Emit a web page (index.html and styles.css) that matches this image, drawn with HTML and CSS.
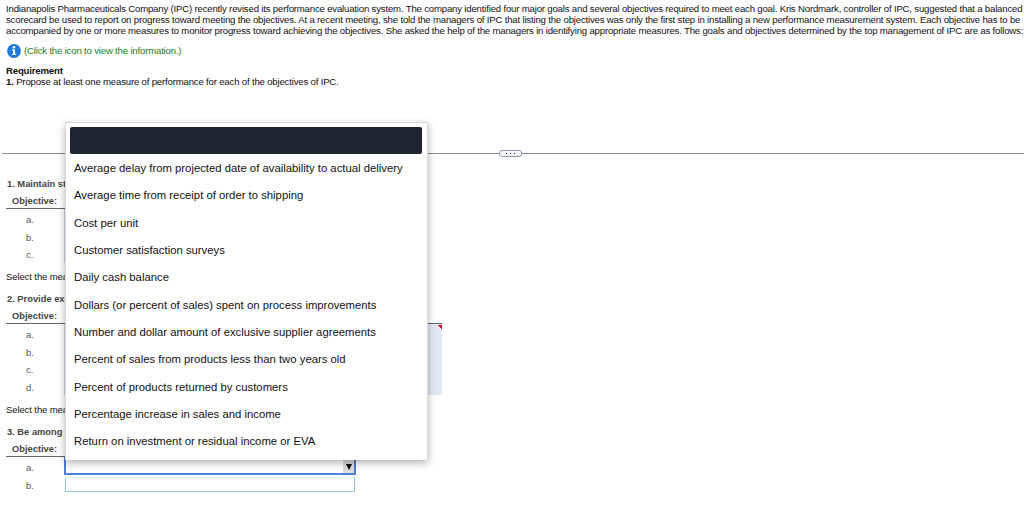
FILE: index.html
```
<!DOCTYPE html>
<html lang="en">
<head>
  <meta charset="UTF-8">
  <title>Indianapolis Pharmaceuticals Company</title>
  <link rel="stylesheet" href="styles.css">
</head>
<body>
  <div class="problem">
    <p class="intro">
      <span class="line">Indianapolis Pharmaceuticals Company (IPC) recently revised its performance evaluation system. The company identified four major goals and several objectives required to meet each goal. Kris Nordmark, controller of IPC, suggested that a balanced</span>
      <span class="line">scorecard be used to report on progress toward meeting the objectives. At a recent meeting, she told the managers of IPC that listing the objectives was only the first step in installing a new performance measurement system. Each objective has to be</span>
      <span class="line">accompanied by one or more measures to monitor progress toward achieving the objectives. She asked the help of the managers in identifying appropriate measures. The goals and objectives determined by the top management of IPC are as follows:</span>
    </p>
    <div class="info">
      <svg class="info-icon" width="14" height="14" viewBox="0 0 14 14">
        <circle cx="7" cy="7" r="6.9" fill="#2079dc"/>
        <circle cx="7" cy="3.3" r="1.3" fill="#fff"/>
        <path d="M5 5.5h3v4.3h1.1v1.3H5V9.8h1.1V6.8H5z" fill="#fff"/>
      </svg>
      <span class="info-text">(Click the icon to view the information.)</span>
    </div>
    <div class="requirement">
      <b class="req-title">Requirement</b>
      <p class="req-text"><b>1.</b> Propose at least one measure of performance for each of the objectives of IPC.</p>
    </div>
  </div>

  <div class="divider">
    <div class="handle"><i></i><i></i><i></i></div>
  </div>

  <div class="sheet">
    <div class="goal goal-1">
      <h3>1. Maintain st</h3>
      <div class="head">Objective:</div>
      <div class="rows">
        <div class="letters"><span>a.</span><span>b.</span><span>c.</span></div>
        <div class="cells"></div>
      </div>
      <p class="note">Select the mea</p>
    </div>
    <div class="goal goal-2">
      <h3>2. Provide ex</h3>
      <div class="head">Objective:</div>
      <div class="rows">
        <div class="letters"><span>a.</span><span>b.</span><span>c.</span><span>d.</span></div>
        <div class="cells"></div>
      </div>
      <p class="note">Select the mea</p>
    </div>
    <div class="goal goal-3">
      <h3>3. Be among</h3>
      <div class="head">Objective:</div>
      <div class="rows">
        <div class="letters"><span>a.</span><span>b.</span></div>
        <div class="fields">
          <div class="select"><div class="arrow"><svg width="6" height="6" viewBox="0 0 6 6"><path d="M0 0h6L3 6z"/></svg></div></div>
          <div class="field"></div>
        </div>
      </div>
    </div>
  </div>

  <div class="menu">
    <div class="item selected"></div>
    <div class="item">Average delay from projected date of availability to actual delivery</div>
    <div class="item">Average time from receipt of order to shipping</div>
    <div class="item">Cost per unit</div>
    <div class="item">Customer satisfaction surveys</div>
    <div class="item">Daily cash balance</div>
    <div class="item">Dollars (or percent of sales) spent on process improvements</div>
    <div class="item">Number and dollar amount of exclusive supplier agreements</div>
    <div class="item">Percent of sales from products less than two years old</div>
    <div class="item">Percent of products returned by customers</div>
    <div class="item">Percentage increase in sales and income</div>
    <div class="item">Return on investment or residual income or EVA</div>
  </div>
</body>
</html>
```
FILE: styles.css
```
* {
  box-sizing: border-box;
}
body {
  margin: 0;
  height: 507px;
  overflow: hidden;
  position: relative;
  background: #fff;
  color: #111;
  font-family: "Liberation Sans", Arial, sans-serif;
  font-size: 9.33px;
}
p, h3 {
  margin: 0;
}
.problem {
  height: 153px;
  padding: 2.5px 0 0 6px;
  font-size: 9.6px;
  letter-spacing: -0.18px;
}
.line {
  display: block;
  line-height: 11.3px;
  white-space: nowrap;
}
.info {
  display: flex;
  align-items: center;
  gap: 3px;
  margin-top: 7.5px;
  height: 14px;
}
.info-icon {
  margin-left: 1px;
}
.info-text {
  color: #1b7d1b;
}
.requirement {
  margin-top: 7px;
  line-height: 11.3px;
}
.req-title {
  display: block;
}
.divider {
  display: flex;
  justify-content: center;
  align-items: center;
  height: 1px;
  margin-left: 2px;
  padding-right: 6px;
  background: #858e98;
}
.handle {
  display: flex;
  justify-content: center;
  align-items: center;
  gap: 3px;
  flex: none;
  width: 23px;
  height: 7px;
  border: 1px solid #8f99a8;
  border-radius: 3px;
  background: #f4f6f8;
}
.handle i {
  width: 1px;
  height: 1px;
  background: #222;
}
.sheet {
  width: 436px;
  margin: 21px 0 0 6px;
}
.goal h3 {
  height: 17px;
  padding-left: 1px;
  font-size: 9.33px;
  line-height: 18px;
  color: #444;
}
.head {
  height: 17px;
  padding-left: 6px;
  border-bottom: 1px solid #666;
  font-weight: bold;
  line-height: 18px;
  color: #444;
}
.goal-1 .head,
.goal-3 .head {
  width: 340px;
}
.rows {
  display: flex;
}
.letters {
  width: 58px;
  padding: 2px 0 0 20px;
  color: #555;
}
.letters span {
  display: block;
  height: 17.6px;
  line-height: 18px;
}
.cells {
  flex: 1;
  margin-bottom: 1px;
  border-left: 1px solid #cdd7ea;
  background: #e1e8f3;
}
.goal-1 .cells {
  flex: none;
  width: 290px;
}
.goal-2 .cells {
  background: linear-gradient(225deg, #c4202c 3.5px, transparent 3.5px) 0 1px no-repeat #e1e8f3;
}
.note {
  height: 26.2px;
  font-size: 9.5px;
  letter-spacing: -0.1px;
  line-height: 26px;
}
.goal-2 .note {
  height: 26.8px;
  line-height: 27px;
}
.fields {
  width: 292px;
}
.select {
  display: flex;
  justify-content: flex-end;
  height: 18px;
  border: 2px solid #4f7fd6;
  border-top: 0;
}
.arrow {
  display: flex;
  justify-content: center;
  align-items: center;
  width: 11px;
  padding-top: 4px;
  background: #dcdcdc;
}
.field {
  width: 290px;
  height: 15px;
  margin: 2px 0 0 1px;
  border: 1px solid #8fc4d2;
  border-top-color: #e6f1f4;
}
/* open dropdown over the sheet */
.menu {
  position: absolute;
  left: 65px;
  top: 122px;
  width: 363px;
  height: 338px;
  padding: 4px;
  border: 1px solid #d8d8d8;
  border-bottom: 0;
  background: #fff;
  box-shadow: 0 3px 8px rgba(0, 0, 0, 0.3);
}
.item {
  height: 27.35px;
  padding-left: 4px;
  font-size: 11.32px;
  line-height: 28px;
  white-space: nowrap;
}
.selected {
  width: 352px;
  height: 27px;
  border-radius: 2px;
  background: #1e242f;
}
```
